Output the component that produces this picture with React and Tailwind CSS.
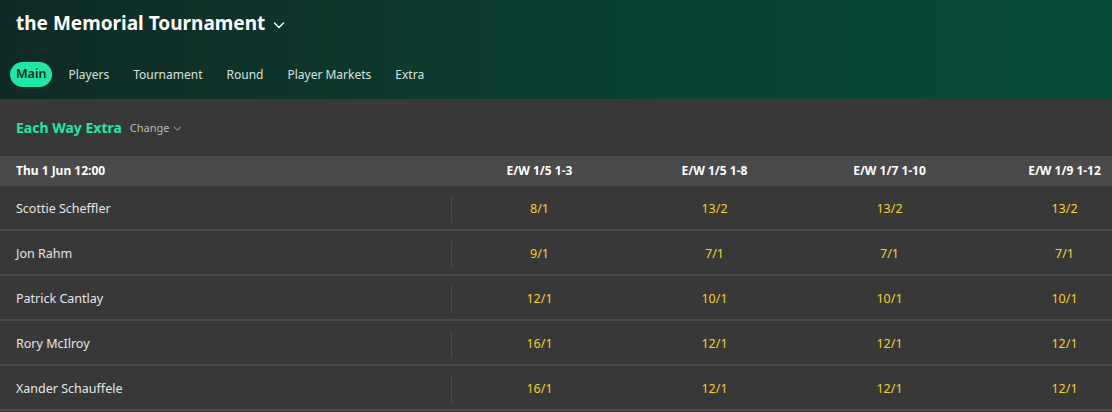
import React from "react";

const FONT = { fontFamily: '"Segoe UI", "Noto Sans", "Open Sans", sans-serif' };

const markets = ["E/W 1/5 1-3", "E/W 1/5 1-8", "E/W 1/7 1-10", "E/W 1/9 1-12"];

const players = [
  { name: "Scottie Scheffler", odds: ["8/1", "13/2", "13/2", "13/2"] },
  { name: "Jon Rahm", odds: ["9/1", "7/1", "7/1", "7/1"] },
  { name: "Patrick Cantlay", odds: ["12/1", "10/1", "10/1", "10/1"] },
  { name: "Rory McIlroy", odds: ["16/1", "12/1", "12/1", "12/1"] },
  { name: "Xander Schauffele", odds: ["16/1", "12/1", "12/1", "12/1"] },
];

const tabs = ["Main", "Players", "Tournament", "Round", "Player Markets", "Extra"];

function Chevron({ size = 14, className = "" }) {
  return (
    <svg width={size} height={size} viewBox="0 0 16 16" fill="none" className={className}>
      <path d="M3.5 6l4.5 4.5L12.5 6" stroke="currentColor" strokeWidth="1.4" strokeLinecap="round" strokeLinejoin="round" />
    </svg>
  );
}

export default function App() {
  return (
    <div className="w-[1112px] h-[412px] overflow-hidden bg-[#383838] text-white" style={FONT}>
      {/* Header */}
      <div className="h-[99px] bg-gradient-to-r from-[#0f2a24] via-[#0a3f31] to-[#084a38] px-[10px] flex flex-col">
        <div className="flex items-center gap-[6px] pl-[6px] pt-[13px] h-[34px]">
          <span className="text-[19px] font-bold leading-none">the Memorial Tournament</span>
          <Chevron size={16} className="text-white mt-[2px]" />
        </div>
        <div className="flex items-center gap-[16px] mt-[28px]">
          {tabs.map((t, i) => (
            <div
              key={t}
              className={
                i === 0
                  ? "h-[25px] px-[6px] rounded-full bg-[#1ee8a7] text-[#0b2a22] text-[12.5px] font-semibold flex items-center"
                  : "h-[25px] text-[12px] text-[#d8e2de] flex items-center mr-[8px]"
              }
            >
              {t}
            </div>
          ))}
        </div>
      </div>

      {/* Market title */}
      <div className="h-[57px] flex items-center px-[16px] gap-[8px] bg-[#383838]">
        <span className="text-[14px] font-bold text-[#1ee8a7]">Each Way Extra</span>
        <span className="text-[11px] text-[#b8b8b8] flex items-center gap-[2px] mt-[1px]">
          Change <Chevron size={11} />
        </span>
      </div>

      {/* Table */}
      <div className="w-[1152px]">
        <div className="grid grid-cols-[452px_175px_175px_175px_175px] h-[30px] bg-[#4a4a4a] items-center text-[12px] font-bold">
          <div className="pl-[16px]">Thu 1 Jun 12:00</div>
          {markets.map((m) => (
            <div key={m} className="text-center">{m}</div>
          ))}
        </div>
        {players.map((p) => (
          <div
            key={p.name}
            className="grid grid-cols-[452px_175px_175px_175px_175px] h-[45px] pt-[4px] items-center border-b-2 border-[#4a4a4a] bg-[#383838]"
          >
            <div className="h-[27px] flex items-center pl-[16px] border-r border-[#4b4b4b] text-[12.5px] text-[#e6e6e6]">
              {p.name}
            </div>
            {p.odds.map((o, i) => (
              <div key={i} className="text-center text-[12.5px] text-[#f2d22c]">{o}</div>
            ))}
          </div>
        ))}
      </div>
    </div>
  );
}
